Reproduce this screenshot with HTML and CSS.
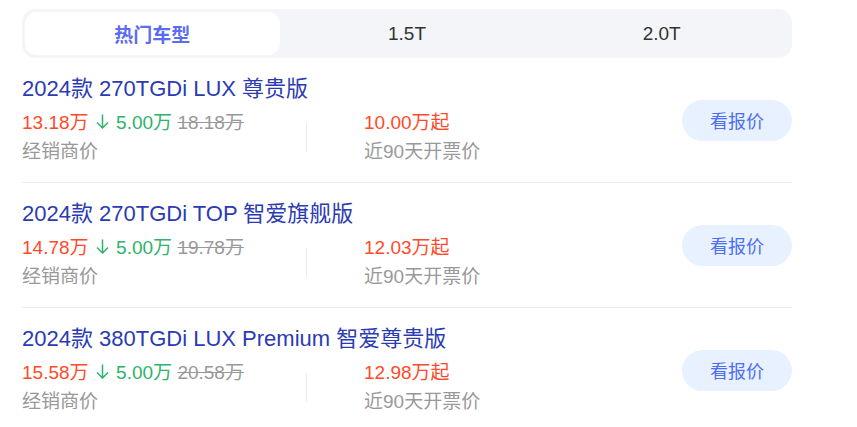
FILE: index.html
```html
<!DOCTYPE html>
<html lang="zh-CN">
<head>
<meta charset="utf-8">
<title>车型报价</title>
<link rel="stylesheet" href="styles.css">
</head>
<body>
<div class="wrap">
  <div class="tabs">
    <div class="tab active">热门车型</div>
    <div class="tab">1.5T</div>
    <div class="tab">2.0T</div>
  </div>
  <div class="list">
    <div class="row">
      <div class="info">
        <div class="title">2024款 270TGDi LUX 尊贵版</div>
        <div class="prices">
          <div class="col1">
            <div class="pline"><span class="red">13.18万</span> <span class="green"><svg class="arrow" viewBox="0 0 13 15"><path d="M6.5 0.5V14M1 8.5L6.5 14L12 8.5"/></svg> 5.00万</span> <span class="old">18.18万</span></div>
            <div class="label">经销商价</div>
          </div>
          <div class="divider"></div>
          <div class="col2">
            <div class="pline"><span class="red">10.00万起</span></div>
            <div class="label">近90天开票价</div>
          </div>
        </div>
      </div>
      <div class="btn">看报价</div>
    </div>
    <div class="row">
      <div class="info">
        <div class="title">2024款 270TGDi TOP 智爱旗舰版</div>
        <div class="prices">
          <div class="col1">
            <div class="pline"><span class="red">14.78万</span> <span class="green"><svg class="arrow" viewBox="0 0 13 15"><path d="M6.5 0.5V14M1 8.5L6.5 14L12 8.5"/></svg> 5.00万</span> <span class="old">19.78万</span></div>
            <div class="label">经销商价</div>
          </div>
          <div class="divider"></div>
          <div class="col2">
            <div class="pline"><span class="red">12.03万起</span></div>
            <div class="label">近90天开票价</div>
          </div>
        </div>
      </div>
      <div class="btn">看报价</div>
    </div>
    <div class="row">
      <div class="info">
        <div class="title">2024款 380TGDi LUX Premium 智爱尊贵版</div>
        <div class="prices">
          <div class="col1">
            <div class="pline"><span class="red">15.58万</span> <span class="green"><svg class="arrow" viewBox="0 0 13 15"><path d="M6.5 0.5V14M1 8.5L6.5 14L12 8.5"/></svg> 5.00万</span> <span class="old">20.58万</span></div>
            <div class="label">经销商价</div>
          </div>
          <div class="divider"></div>
          <div class="col2">
            <div class="pline"><span class="red">12.98万起</span></div>
            <div class="label">近90天开票价</div>
          </div>
        </div>
      </div>
      <div class="btn">看报价</div>
    </div>
  </div>
</div>
</body>
</html>
```
FILE: styles.css
```css
html, body {
  margin: 0;
  padding: 0;
  background: #fff;
}
body {
  font-family: "Liberation Sans", Arial, "Noto Sans CJK SC", sans-serif;
  color: #333;
}
.wrap {
  width: 770px;
  margin: 9px 0 0 22px;
}
.tabs {
  display: grid;
  grid-template-columns: 1fr 1fr 1fr;
  background: #f3f5f9;
  border-radius: 14px;
  padding: 3px;
  height: 43px;
}
.tab {
  display: flex;
  align-items: center;
  justify-content: center;
  font-size: 19px;
  color: #333;
  border-radius: 12px;
}
.tab.active {
  background: #fff;
  color: #5b6cf2;
  font-weight: bold;
}
.list {
  margin-top: 16px;
}
.row {
  display: flex;
  align-items: center;
  justify-content: space-between;
  padding-bottom: 16px;
  border-bottom: 1px solid #ececec;
  margin-bottom: 16px;
}
.row:last-child {
  border-bottom: none;
  margin-bottom: 0;
}
.title {
  font-size: 22px;
  line-height: 30px;
  color: #2b3bb3;
  white-space: nowrap;
}
.prices {
  display: flex;
  align-items: center;
  margin-top: 4px;
}
.col1 {
  width: 284px;
}
.divider {
  width: 1px;
  height: 29px;
  background: #ececec;
}
.col2 {
  margin-left: 57px;
}
.pline, .label {
  font-size: 19px;
  line-height: 29px;
  white-space: nowrap;
}
.arrow {
  width: 13px;
  height: 15px;
  margin: 0 2px;
  vertical-align: baseline;
  fill: none;
  stroke: #2db36b;
  stroke-width: 1.5;
}
.red { color: #ff4a2a; }
.green { color: #2db36b; }
.old {
  color: #999;
  text-decoration: line-through;
}
.label {
  color: #999;
}
.btn {
  width: 110px;
  height: 41px;
  border-radius: 21px;
  background: #e8f1ff;
  color: #4e6ef2;
  font-size: 18px;
  display: flex;
  align-items: center;
  justify-content: center;
}
```
